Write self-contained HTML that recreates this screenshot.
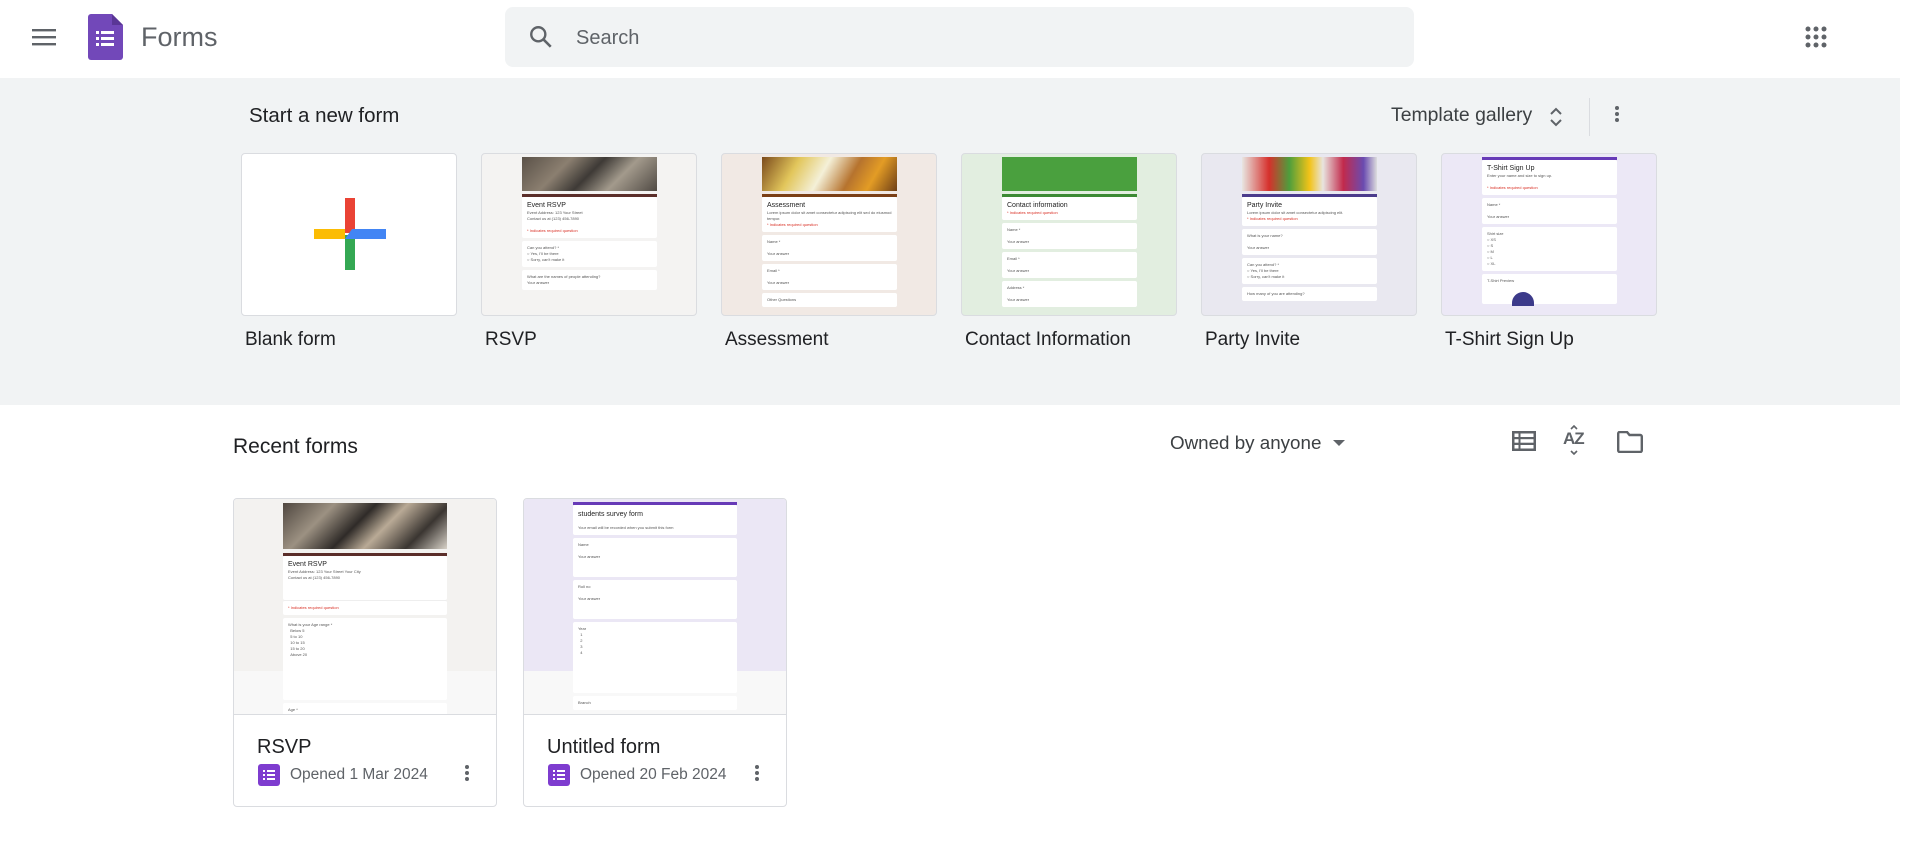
<!DOCTYPE html>
<html><head><meta charset="utf-8"><style>
*{box-sizing:border-box;margin:0;padding:0}
body{width:1919px;height:843px;overflow:hidden;background:#fff;font-family:"Liberation Sans",Arial,sans-serif;color:#202124;position:relative}
.abs{position:absolute}
.band{position:absolute;left:0;top:78px;width:1900px;height:327px;background:#f1f3f4}
.tc{position:absolute;top:153px;width:216px;height:163px;border:1px solid #dadce0;border-radius:4px;overflow:hidden}
.tl{position:absolute;top:329px;font-size:19px;color:#202124}
.form{position:absolute;left:40px;width:135px;top:0;height:163px}
.hdr{height:34px;margin-top:3px}
.sec{background:#fff;margin-top:3px;border-radius:2px;padding:4px 5px;font-size:4px;color:#555;line-height:6px}
.ttl{font-size:7px;color:#222;line-height:9px}
.red{color:#d93025}
.rc{position:absolute;top:498px;width:264px;height:309px;border:1px solid #dadce0;border-radius:4px;overflow:hidden;background:#fff}
.rth{height:216px;border-bottom:1px solid #dadce0;position:relative;overflow:hidden}
.fic{position:absolute;width:22px;height:22px;border-radius:3px;background:#7e3ccf}
.dots span{display:block;width:4px;height:4px;border-radius:50%;background:#5f6368;margin:2px 0}
</style></head><body>
<svg class="abs" style="left:32px;top:27px" width="24" height="20" viewBox="0 0 24 20"><rect x="0" y="2" width="24" height="2.4" fill="#5f6368"/><rect x="0" y="9" width="24" height="2.4" fill="#5f6368"/><rect x="0" y="16" width="24" height="2.4" fill="#5f6368"/></svg>
<svg class="abs" style="left:88px;top:14px" width="35" height="46" viewBox="0 0 35 46"><path d="M3 0H24L35 11V43a3 3 0 0 1-3 3H3a3 3 0 0 1-3-3V3a3 3 0 0 1 3-3z" fill="#7248b9"/><path d="M24 0V11H35z" fill="#5a3696"/><g fill="#fff"><rect x="8" y="17" width="3" height="3"/><rect x="13" y="17" width="13" height="3"/><rect x="8" y="23" width="3" height="3"/><rect x="13" y="23" width="13" height="3"/><rect x="8" y="29" width="3" height="3"/><rect x="13" y="29" width="13" height="3"/></g></svg>
<div class="abs" style="left:141px;top:22px;font-size:27px;color:#5f6368">Forms</div>
<div class="abs" style="left:505px;top:7px;width:909px;height:60px;background:#f1f3f4;border-radius:8px"></div>
<svg class="abs" style="left:528px;top:24px" width="26" height="26" viewBox="0 0 24 24"><circle cx="9.5" cy="9.5" r="6.5" fill="none" stroke="#5f6368" stroke-width="2.2"/><path d="M14.5 14.5L21 21" stroke="#5f6368" stroke-width="2.4"/></svg>
<div class="abs" style="left:576px;top:27px;font-size:20px;color:#5f6368">Search</div>
<svg class="abs" style="left:1805px;top:26px" width="22" height="22" viewBox="0 0 22 22" fill="#5f6368"><circle cx="3" cy="3" r="2.5"/><circle cx="11" cy="3" r="2.5"/><circle cx="19" cy="3" r="2.5"/><circle cx="3" cy="11" r="2.5"/><circle cx="11" cy="11" r="2.5"/><circle cx="19" cy="11" r="2.5"/><circle cx="3" cy="19" r="2.5"/><circle cx="11" cy="19" r="2.5"/><circle cx="19" cy="19" r="2.5"/></svg>

<div class="band"></div>
<div class="abs" style="left:249px;top:104px;font-size:20.5px;color:#202124">Start a new form</div>
<div class="abs" style="left:1391px;top:104px;font-size:19.4px;color:#3c4043">Template gallery</div>
<svg class="abs" style="left:1549px;top:106px" width="14" height="22" viewBox="0 0 14 22"><path d="M2 8L7 3L12 8M2 14L7 19L12 14" fill="none" stroke="#5f6368" stroke-width="2"/></svg>
<div class="abs" style="left:1589px;top:98px;width:1px;height:38px;background:#dadce0"></div>
<div class="abs dots" style="left:1615px;top:104px"><span></span><span></span><span></span></div>

<div class="tc" style="left:241px;background:#fff">
<svg class="abs" style="left:72px;top:44px" width="72" height="72" viewBox="0 0 72 72"><rect x="31" y="0" width="10" height="35" fill="#ea4335"/><rect x="0" y="31" width="31" height="10" fill="#fbbc04"/><rect x="31" y="37" width="10" height="35" fill="#34a853"/><path d="M31 41L38 31H72V41z" fill="#4285f4"/></svg>
</div>
<div class="tl" style="left:245px">Blank form</div>

<div class="tc" style="left:481px;background:#f4f3f2"><div class="form">
<div class="hdr" style="background:linear-gradient(135deg,#5a5148,#8b7f70 30%,#3e3a36 50%,#a39a8c 70%,#504a44)"></div>
<div style="height:3px;background:#5b2e2a;margin-top:3px"></div>
<div class="sec" style="margin-top:0"><div class="ttl">Event RSVP</div>Event Address: 123 Your Street<br>Contact us at (123) 456-7890<br><br><span class="red">* Indicates required question</span></div>
<div class="sec">Can you attend? *<br>○ Yes, I'll be there<br>○ Sorry, can't make it</div>
<div class="sec">What are the names of people attending?<br>Your answer</div></div></div>
<div class="tl" style="left:485px">RSVP</div>

<div class="tc" style="left:721px;background:#f1e9e4"><div class="form">
<div class="hdr" style="background:linear-gradient(120deg,#7b4a1c,#e2c65b 25%,#f4f0d8 45%,#b6732e 65%,#e39c25 80%,#6e3f17)"></div>
<div style="height:3px;background:#7b3f16;margin-top:3px"></div>
<div class="sec" style="margin-top:0"><div class="ttl">Assessment</div>Lorem ipsum dolor sit amet consectetur adipiscing elit sed do eiusmod tempor.<br><span class="red">* Indicates required question</span></div>
<div class="sec">Name *<br><br>Your answer</div>
<div class="sec">Email *<br><br>Your answer</div>
<div class="sec">Other Questions</div></div></div>
<div class="tl" style="left:725px">Assessment</div>

<div class="tc" style="left:961px;background:#e2eee0"><div class="form">
<div class="hdr" style="background:#4aa03e"></div>
<div style="height:3px;background:#3c8a34;margin-top:3px"></div>
<div class="sec" style="margin-top:0"><div class="ttl">Contact information</div><span class="red">* Indicates required question</span></div>
<div class="sec">Name *<br><br>Your answer</div>
<div class="sec">Email *<br><br>Your answer</div>
<div class="sec">Address *<br><br>Your answer</div></div></div>
<div class="tl" style="left:965px">Contact Information</div>

<div class="tc" style="left:1201px;background:#e9e8f0"><div class="form">
<div class="hdr" style="background:linear-gradient(90deg,#e8e6e2,#d6302c 20%,#4e9e3c 35%,#f2c318 50%,#e8e4df 60%,#c22a4c 75%,#6a4bb0 90%,#ddd)"></div>
<div style="height:3px;background:#4b3b8c;margin-top:3px"></div>
<div class="sec" style="margin-top:0"><div class="ttl">Party Invite</div>Lorem ipsum dolor sit amet consectetur adipiscing elit.<br><span class="red">* Indicates required question</span></div>
<div class="sec">What is your name?<br><br>Your answer</div>
<div class="sec">Can you attend? *<br>○ Yes, I'll be there<br>○ Sorry, can't make it</div>
<div class="sec">How many of you are attending?</div></div></div>
<div class="tl" style="left:1205px">Party Invite</div>

<div class="tc" style="left:1441px;background:#ece8f6"><div class="form">
<div style="height:3px;background:#673ab7;margin-top:3px"></div>
<div class="sec" style="margin-top:0"><div class="ttl">T-Shirt Sign Up</div>Enter your name and size to sign up.<br><br><span class="red">* Indicates required question</span></div>
<div class="sec">Name *<br><br>Your answer</div>
<div class="sec">Shirt size<br>○ XS<br>○ S<br>○ M<br>○ L<br>○ XL</div>
<div class="sec" style="height:30px;position:relative">T-Shirt Preview<div style="position:absolute;left:30px;top:18px;width:22px;height:14px;border-radius:11px 11px 0 0;background:#3c3a8a"></div></div></div></div>
<div class="tl" style="left:1445px">T-Shirt Sign Up</div>

<div class="abs" style="left:233px;top:435px;font-size:21px;color:#202124">Recent forms</div>
<div class="abs" style="left:1170px;top:432px;font-size:18.8px;color:#3c4043">Owned by anyone</div>
<svg class="abs" style="left:1332px;top:438px" width="14" height="10" viewBox="0 0 14 10"><path d="M1 2H13L7 8z" fill="#5f6368"/></svg>
<svg class="abs" style="left:1512px;top:431px" width="24" height="20" viewBox="0 0 24 20" fill="#5f6368"><rect x="0" y="0" width="24" height="20"/><g fill="#fff"><rect x="2.5" y="2.5" width="4" height="3.5"/><rect x="8.5" y="2.5" width="13" height="3.5"/><rect x="2.5" y="8.2" width="4" height="3.5"/><rect x="8.5" y="8.2" width="13" height="3.5"/><rect x="2.5" y="14" width="4" height="3.5"/><rect x="8.5" y="14" width="13" height="3.5"/></g></svg>
<div class="abs" style="left:1563px;top:429px;font-size:17px;font-weight:bold;color:#5f6368;letter-spacing:-1px">AZ</div>
<svg class="abs" style="left:1569px;top:425px" width="10" height="30" viewBox="0 0 10 30"><path d="M2 4L5 1L8 4M2 26L5 29L8 26" fill="none" stroke="#5f6368" stroke-width="1.6"/></svg>
<svg class="abs" style="left:1617px;top:431px" width="26" height="22" viewBox="0 0 26 22"><path d="M1.2 2.5a1.5 1.5 0 0 1 1.5-1.5H10l2.5 3H23.3a1.5 1.5 0 0 1 1.5 1.5V19.5a1.5 1.5 0 0 1-1.5 1.5H2.7a1.5 1.5 0 0 1-1.5-1.5z" fill="none" stroke="#5f6368" stroke-width="2.4"/></svg>

<div class="rc" style="left:233px"><div class="rth" style="background:linear-gradient(#f3f2f0 80%,#f8f8f8 80%)">
<div style="position:absolute;left:49px;top:4px;width:164px">
<div style="height:46px;background:linear-gradient(135deg,#4f4740,#9c9182 25%,#2f2b28 45%,#b9aa96 60%,#3a3531 80%,#d8d2c8)"></div>
<div style="height:3px;background:#5b2e2a;margin-top:4px"></div>
<div class="sec" style="margin-top:0;height:44px"><div class="ttl">Event RSVP</div>Event Address: 123 Your Street Your City<br>Contact us at (123) 456-7890</div>
<div class="sec" style="margin-top:0;border-top:1px solid #eee"><span class="red">* Indicates required question</span></div>
<div class="sec" style="height:82px">What is your Age range *<br>&nbsp;&nbsp;Below 5<br>&nbsp;&nbsp;5 to 10<br>&nbsp;&nbsp;10 to 15<br>&nbsp;&nbsp;15 to 20<br>&nbsp;&nbsp;Above 20</div>
<div class="sec">Age *</div></div></div>
<div class="abs" style="left:23px;top:237px;font-size:20px;color:#202124">RSVP</div>
<div class="fic" style="left:24px;top:265px"></div>
<svg class="abs" style="left:24px;top:265px" width="22" height="22" viewBox="0 0 22 22" fill="#fff"><rect x="5" y="6" width="2" height="2"/><rect x="9" y="6" width="8" height="2"/><rect x="5" y="10" width="2" height="2"/><rect x="9" y="10" width="8" height="2"/><rect x="5" y="14" width="2" height="2"/><rect x="9" y="14" width="8" height="2"/></svg>
<div class="abs" style="left:56px;top:267px;font-size:15.5px;color:#5f6368">Opened 1 Mar 2024</div>
<div class="abs dots" style="left:231px;top:264px"><span></span><span></span><span></span></div>
</div>

<div class="rc" style="left:523px"><div class="rth" style="background:linear-gradient(#ebe7f5 80%,#f8f8f8 80%)">
<div style="position:absolute;left:49px;top:3px;width:164px">
<div style="height:3px;background:#673ab7"></div>
<div class="sec" style="margin-top:0;padding-top:5px"><div class="ttl">students survey form</div><br>Your email will be recorded when you submit this form</div>
<div class="sec" style="height:39px">Name<br><br>Your answer</div>
<div class="sec" style="height:39px">Roll no<br><br>Your answer</div>
<div class="sec" style="height:71px">Year<br>&nbsp;&nbsp;1<br>&nbsp;&nbsp;2<br>&nbsp;&nbsp;3<br>&nbsp;&nbsp;4</div>
<div class="sec">Branch</div></div></div>
<div class="abs" style="left:23px;top:237px;font-size:20px;color:#202124">Untitled form</div>
<div class="fic" style="left:24px;top:265px"></div>
<svg class="abs" style="left:24px;top:265px" width="22" height="22" viewBox="0 0 22 22" fill="#fff"><rect x="5" y="6" width="2" height="2"/><rect x="9" y="6" width="8" height="2"/><rect x="5" y="10" width="2" height="2"/><rect x="9" y="10" width="8" height="2"/><rect x="5" y="14" width="2" height="2"/><rect x="9" y="14" width="8" height="2"/></svg>
<div class="abs" style="left:56px;top:267px;font-size:15.5px;color:#5f6368">Opened 20 Feb 2024</div>
<div class="abs dots" style="left:231px;top:264px"><span></span><span></span><span></span></div>
</div>
</body></html>
